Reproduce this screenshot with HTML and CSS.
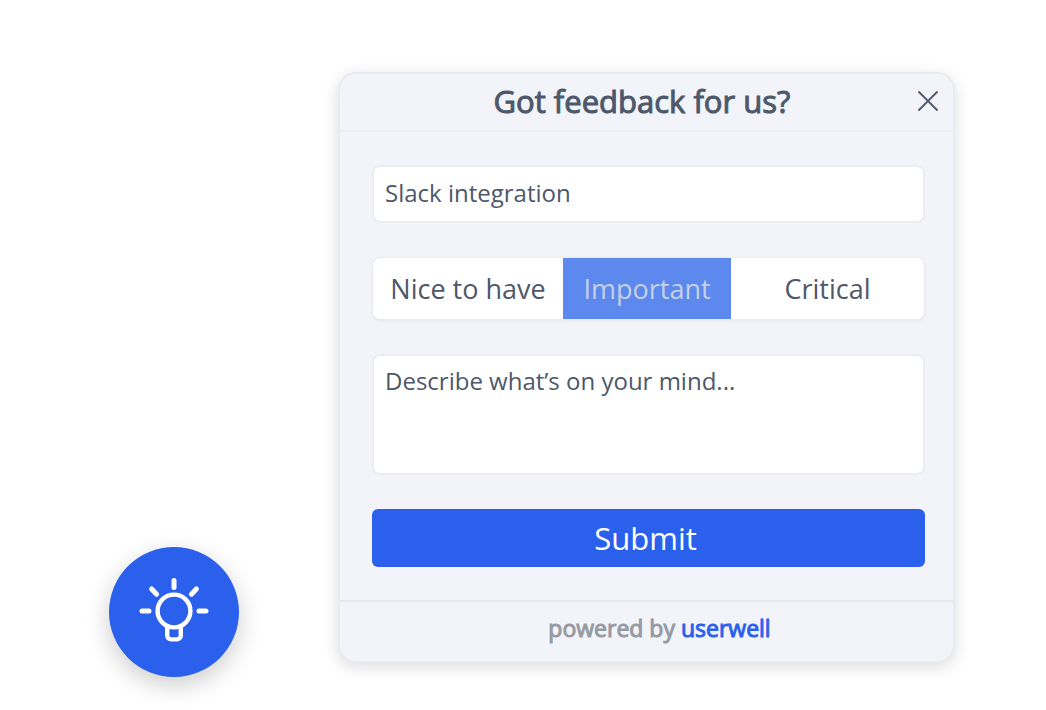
FILE: index.html
```html
<!DOCTYPE html>
<html lang="en">
<head>
<meta charset="utf-8">
<title>Feedback</title>
<link rel="stylesheet" href="styles.css">
</head>
<body>
<main class="page">
  <button class="launcher" type="button" aria-label="Open feedback">
    <svg class="launcher-icon" viewBox="0 0 70 70" fill="none" stroke="currentColor" stroke-width="4.4" stroke-linecap="round" stroke-linejoin="round" aria-hidden="true">
      <circle cx="35" cy="34" r="16.4"/>
      <path d="M28.2 50v8.400a4 4 0 0 0 4 4h5.600a4 4 0 0 0 4-4V50"/>
      <path d="M35 3.500v7M12.600 12l5 5.200M57.400 12l-5 5.200M3 34h7M60 34h7" stroke-width="5"/>
    </svg>
  </button>

  <form class="card">
    <header class="card-header">
      <h1 class="title">Got feedback for us?</h1>
      <button class="close" type="button" aria-label="Close">
        <svg class="close-icon" viewBox="0 0 20 20" fill="none" stroke="currentColor" stroke-width="1.8" stroke-linecap="round" aria-hidden="true">
          <path d="M1 1l18 18M19 1L1 19"/>
        </svg>
      </button>
    </header>

    <div class="card-body">
      <input class="field" type="text" value="Slack integration" aria-label="Subject">
      <div class="segments" role="radiogroup" aria-label="Priority">
        <label class="segment"><input class="segment-input" type="radio" name="priority">Nice to have</label>
        <label class="segment"><input class="segment-input" type="radio" name="priority" checked>Important</label>
        <label class="segment"><input class="segment-input" type="radio" name="priority">Critical</label>
      </div>
      <textarea class="field field-area" placeholder="Describe what’s on your mind..." aria-label="Description"></textarea>
      <button class="submit" type="submit">Submit</button>
    </div>

    <footer class="card-footer">powered by <a class="brand" href="#">userwell</a></footer>
  </form>
</main>
</body>
</html>
```

FILE: styles.css
```css
* {
  box-sizing: border-box;
}

body {
  margin: 0;
  background: #fff;
  color: #4d586b;
  font-family: "Open Sans", sans-serif;
}

button,
input,
textarea {
  font: inherit;
  color: inherit;
}

.page {
  display: flex;
  align-items: flex-end;
  gap: 99px;
  padding: 72px 91px 33px 109px;
}

.launcher {
  display: grid;
  place-items: center;
  flex: none;
  width: 130px;
  height: 130px;
  padding: 0;
  border: 0;
  border-radius: 50%;
  background: #2b60ec;
  color: #fff;
  box-shadow: 0 8px 24px rgba(0, 0, 0, 0.2);
}

.launcher-icon {
  width: 70px;
  height: 70px;
}

.card {
  flex: 1;
  min-width: 0;
  margin-bottom: 14px;
  border: 2px solid #eaebee;
  border-radius: 18px;
  background: #f2f4f9;
  box-shadow: 0 4px 16px rgba(0, 0, 0, 0.14);
}

.card-header {
  display: flex;
  align-items: center;
  height: 58px;
  padding: 0 15px 2px 43px;
  border-bottom: 2px solid #edeff3;
}

.title {
  flex: 1;
  margin: 0;
  padding-right: 17px;
  font-size: 31px;
  font-weight: 400;
  line-height: 40px;
  text-align: center;
  -webkit-text-stroke: 1px currentColor;
}

.close {
  display: grid;
  padding: 0;
  border: 0;
  background: none;
}

.close-icon {
  width: 20px;
  height: 20px;
}

.card-body {
  display: grid;
  gap: 34px;
  padding: 33px 28px 33px 32px;
}

.field {
  display: block;
  width: 100%;
  height: 58px;
  padding: 0 11px 4px;
  border: 2px solid #ebedf1;
  border-radius: 8px;
  background: #fff;
  font-size: 24px;
  line-height: 32px;
}

.field-area {
  height: 121px;
  padding: 9px 11px;
  resize: none;
}

.field-area::placeholder {
  color: inherit;
  opacity: 1;
}

.segments {
  display: grid;
  grid-template-columns: 190fr 168fr 193fr;
  height: 63px;
  overflow: hidden;
  border: 1px solid #e9ebef;
  border-radius: 8px;
  background: #fff;
  box-shadow: 0 1px 3px rgba(0, 0, 0, 0.06);
}

.segment {
  display: flex;
  align-items: center;
  justify-content: center;
  font-size: 27px;
}

.segment-input {
  position: absolute;
  opacity: 0;
}

.segment:has(:checked) {
  background: #5d89ee;
  color: #c6d0e4;
}

.submit {
  height: 58px;
  padding: 0 6px 0 0;
  border: 0;
  border-radius: 6px;
  background: #2b60ec;
  color: #fff;
  font-size: 31px;
  line-height: 40px;
}

.card-footer {
  padding: 10px 0 17px 26px;
  border-top: 2px solid #e6e8ec;
  color: #969ba2;
  font-size: 23px;
  line-height: 32px;
  text-align: center;
  -webkit-text-stroke: 1px currentColor;
}

.brand {
  color: #2b60ec;
  text-decoration: none;
}
```
